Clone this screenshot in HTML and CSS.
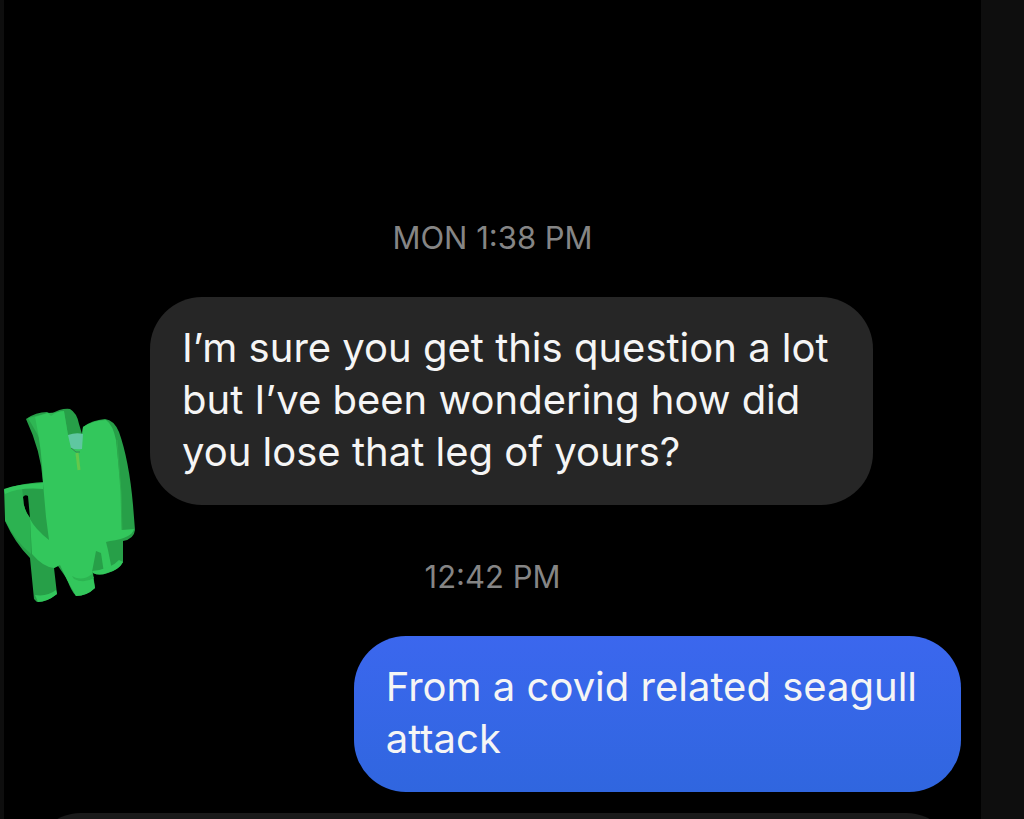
FILE: index.html
```
<!DOCTYPE html>
<html lang="en">
	<head>
		<meta charset="utf-8">
		<meta name="viewport" content="width=device-width, initial-scale=1">
		<title>Messages</title>
		<link rel="stylesheet" href="styles.css">
	</head>
	<body>
		<main class="chat">
			<time class="timestamp">MON 1:38 PM</time>

			<div class="row row-received">
				<div class="avatar">
					<!-- marker scribble over the avatar -->
					<svg class="scribble" viewBox="0 400 140 210" aria-hidden="true">
						<path fill="#279f48" d="M26 419Q36 412 47 412L51 414Q61 408 70 409Q77 413 79 424L82 434L83 427Q92 420 105 419Q114 420 119 432Q129 460 133 505L135 530Q134 539 123 541L123 562Q120 569 108 573Q99 576 93 573L95 588Q86 596 76 596Q71 591 67 579L58 566L54 568L57 594Q47 602 37 602L34 599L30 558Q15 543 5 521L4 490Q16 484 43 482Q41 451 26 419Z"/>
						<path fill="#000" d="M23 497Q25 494 28 496L30 518Q23 509 23 497Z"/>
						<path fill="#2eb653" d="M28 418L48 413L64 412L68 435L45 450Q38 434 28 418Z"/>
						<path fill="#33c75c" d="M35 417L48 413L51 416Q57 411 64 411L68 435L82 436L83 427Q94 420 106 420Q113 425 116 440L121 490L122 530L134 529Q132 538 110 541L106 542L108 550L112 570L104 573L101 553L96 551L92 572L95 588Q87 596 76 596L67 580L60 565L54 568Q43 567 32 554L30 519Q35 529 49 540L46 517L43 483Q42 449 35 417Z"/>
						<path fill="#2cb251" d="M5 491L22 488L23 497Q23 509 30 518L31 554Q15 541 5 520Z"/>
						<path fill="#33c75c" d="M4 489Q17 484 43 483L43 489Q20 487 5 494ZM35 595Q47 597 56 590L57 594Q47 602 38 602ZM92 571Q111 569 119 560L123 562Q119 570 107 573Q99 576 93 573Z"/>
						<path fill="#2cb451" d="M72 576Q82 582 92 574L94 578Q84 584 74 579Z"/>
						<path fill="#5fc7a1" d="M68 435Q76 432 83 434L82 449Q75 450 71 448Z"/>
						<path fill="none" stroke="#348a50" stroke-width="1" d="M71 448L76 452L80 452"/>
						<path fill="none" stroke="#65c84b" stroke-width="3" d="M77 453L79 470"/>
						<path fill="none" stroke="#2dac4d" stroke-width="1" d="M117 440L121 492L122 530"/>
					</svg>
				</div>
				<p class="bubble bubble-received">I’m sure you get this question a lot<br>but I’ve been wondering how did<br>you lose that leg of yours?</p>
			</div>

			<time class="timestamp">12:42 PM</time>

			<div class="row row-sent">
				<p class="bubble bubble-sent">From a covid related seagull<br>attack</p>
			</div>

			<div class="composer"></div>
		</main>
	</body>
</html>
```
FILE: styles.css
```
* {
	box-sizing: border-box;
}

body {
	margin: 0;
	height: 100vh;
	background: #0e0e0e;
	font-family: Inter, "Liberation Sans", sans-serif;
}

.chat {
	display: flex;
	flex-direction: column;
	height: 100%;
	margin: 0 43px 0 4px;
	padding: 218px 20px 0 0;
	overflow: hidden;
	background: #000;
	color: #f5f5f5;
}

.timestamp {
	margin-right: -20px;
	color: #858585;
	font-size: 31px;
	line-height: 40px;
	text-align: center;
}

.row {
	display: flex;
	flex-shrink: 0;
}

.row-received {
	margin: 39px 0 52px;
}

.row-sent {
	justify-content: flex-end;
	margin-top: 39px;
}

.avatar {
	position: relative;
	flex: 0 0 146px;
}

/* hangs below the bubble's lower edge */
.scribble {
	position: absolute;
	left: -4px;
	bottom: -105px;
	width: 140px;
	height: 210px;
}

.bubble {
	margin: 0;
	padding: 25px 44px 27px 32px;
	border-radius: 52px;
	font-size: 40px;
	line-height: 52px;
}

.bubble-received {
	background: #262626;
}

.bubble-sent {
	background: linear-gradient(#3b67ee, #3066df);
}

/* only its top edge shows at the bottom of the screen */
.composer {
	flex: 0 0 100px;
	margin: 21px 5px 0 27px;
	border-radius: 50px;
	background: #1a1a1a;
}
```
